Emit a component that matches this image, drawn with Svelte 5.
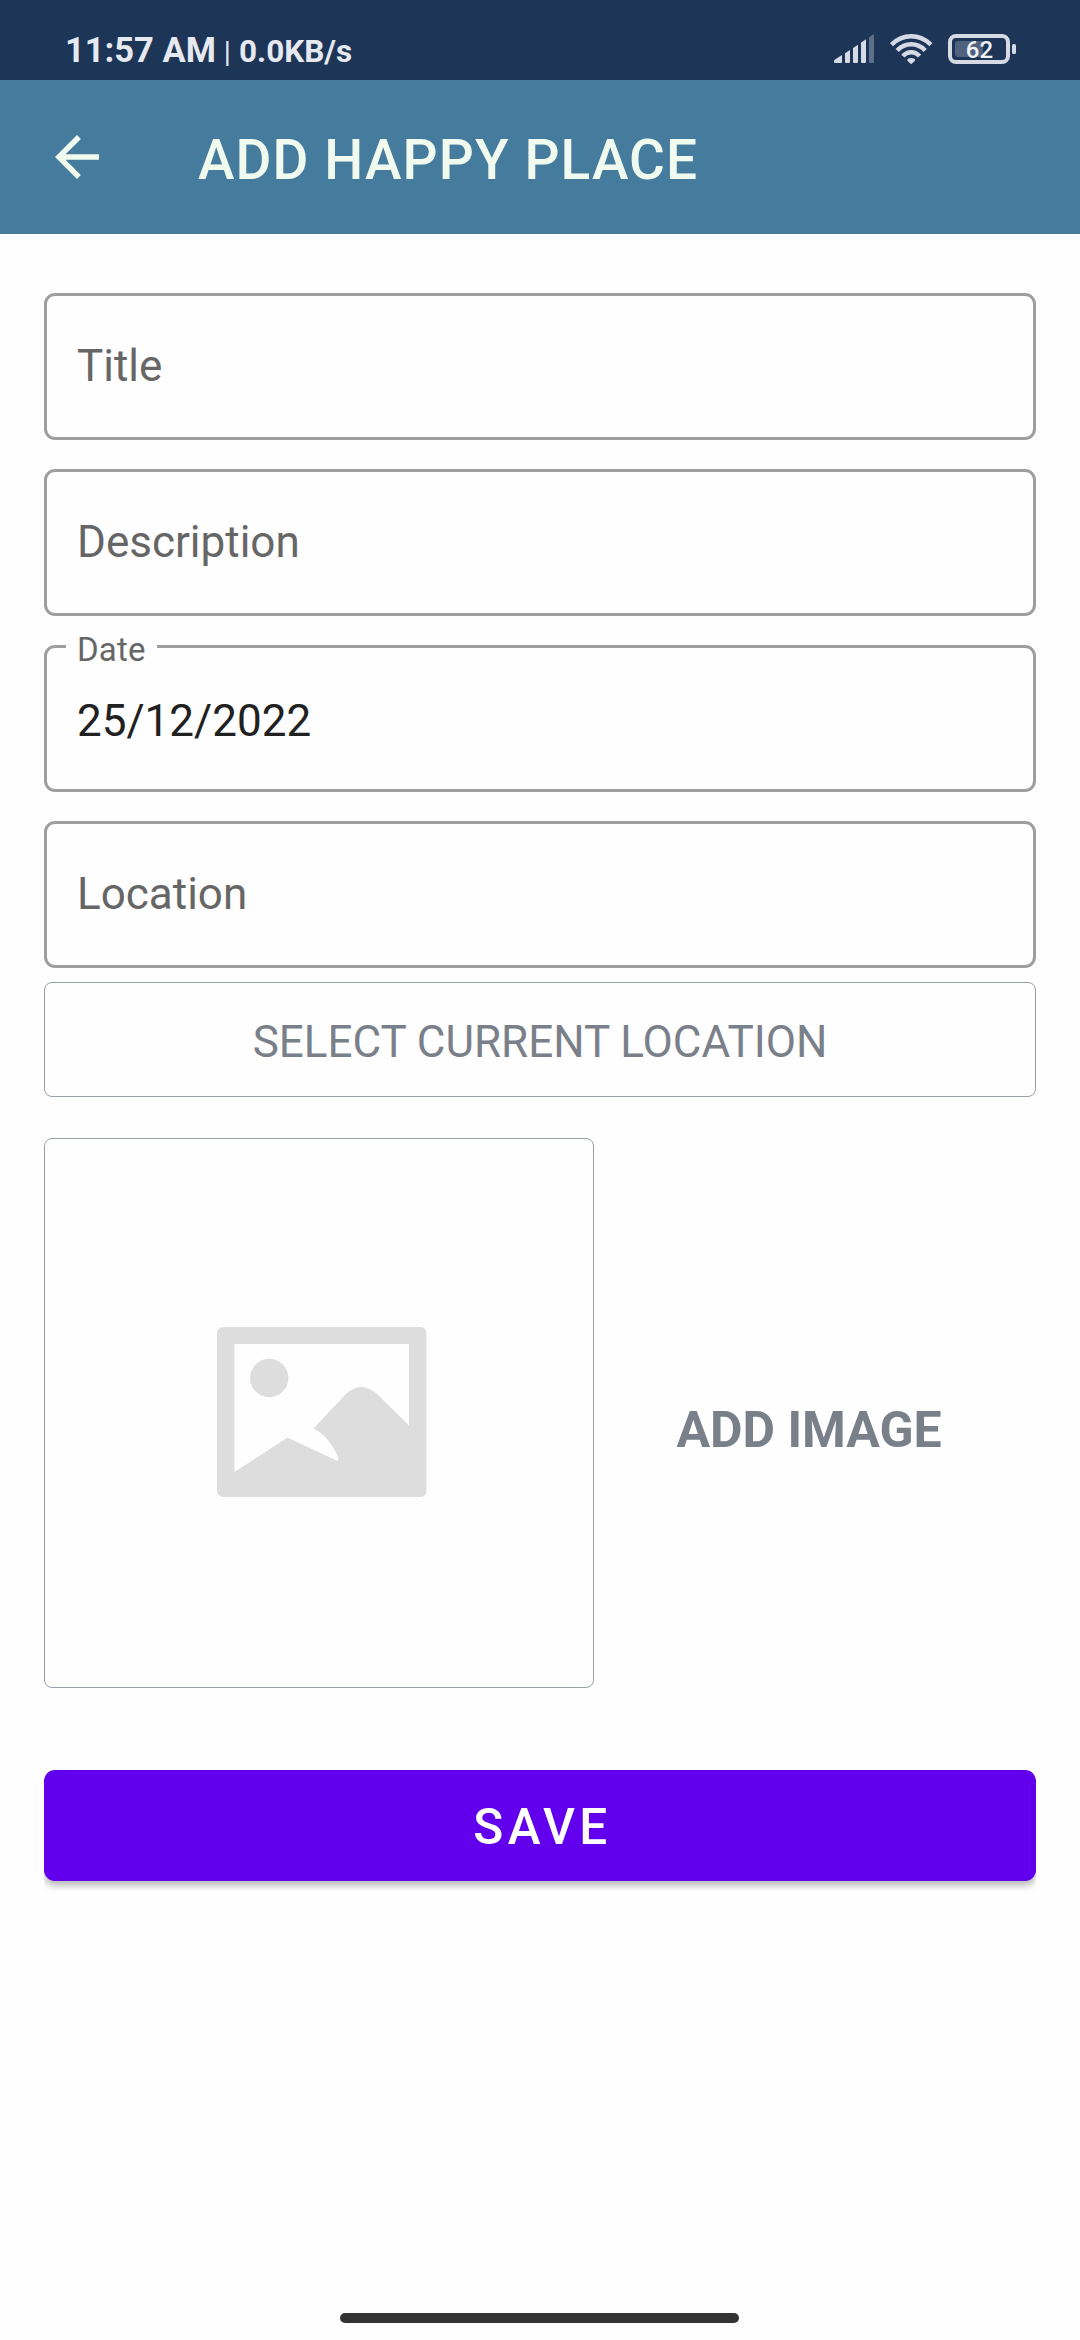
<script>
  const fields = [
    { label: 'Title', value: '' },
    { label: 'Description', value: '' },
    { label: 'Date', value: '25/12/2022' },
    { label: 'Location', value: '' }
  ];
</script>

<div class="screen">
  <header>
    <div class="status">
      <div class="clock"><span class="time">11:57 AM</span><span class="sep">|</span><span class="rate">0.0KB/s</span></div>
      <svg class="indicators" width="186" height="34" viewBox="0 0 186 34">
        <g fill="#d5dae4">
          <path d="M0 27.2 Q0 26.3 1 25.6 L8 21 V28 Q8 29 7 29 H1 Q0 29 0 28 Z" />
          <path d="M11 19.2 L16 16 V28 Q16 29 15 29 H12 Q11 29 11 28 Z" />
          <path d="M19 14 L24 10.8 V28 Q24 29 23 29 H20 Q19 29 19 28 Z" />
          <path d="M27 8.5 L32 5.2 V28 Q32 29 31 29 H28 Q27 29 27 28 Z" />
          <path d="M35 3.2 L40 0 V29 H36 Q35 29 35 28 Z" opacity=".35" />
          <path d="M77.2 30.2 L73.6 27 Q72.6 25.6 74.4 24.6 Q77.2 23.2 80 24.6 Q81.8 25.6 80.8 27 Z" />
        </g>
        <g fill="none" stroke="#d5dae4" stroke-width="4.4">
          <path d="M57.5 10.6 Q66 2.2 77.2 2.2 T96.9 10.6" />
          <path d="M63.2 16.4 Q69 10.2 77.2 10.2 T91.2 16.4" />
          <path d="M68.9 22.2 Q72.2 18.2 77.2 18.2 T85.5 22.2" />
        </g>
        <rect x="116" y="2" width="58" height="26" rx="6" fill="none" stroke="#d5dae4" stroke-width="4" />
        <path d="M124 7 H149 V23 H124 Q121 23 121 20 V10 Q121 7 124 7 Z" fill="#d5dae4" opacity=".27" />
        <rect x="178" y="10" width="4" height="10" rx="1.5" fill="#d5dae4" />
        <text x="145.5" y="24" text-anchor="middle" class="level">62</text>
      </svg>
    </div>
    <div class="toolbar">
      <svg class="back" width="44" height="44" viewBox="0 0 16 16" fill="#f1faee">
        <path d="M16 7H3.830l5.590-5.590L8 0 0 8l8 8 1.410-1.410L3.830 9H16V7z" />
      </svg>
      <h1>ADD HAPPY PLACE</h1>
    </div>
  </header>

  <main>
    <div class="fields">
      {#each fields as f}
        <div class="field">
          {#if f.value}
            <span class="float">{f.label}</span>
            <span class="value">{f.value}</span>
          {:else}
            <span class="hint">{f.label}</span>
          {/if}
        </div>
      {/each}
    </div>
    <button class="locate">SELECT CURRENT LOCATION</button>
    <div class="picture">
      <div class="preview">
        <svg width="210" height="170" viewBox="0 0 210 170">
          <path fill="#ddd" fill-rule="evenodd" d="M7 0H203Q209.5 0 209.5 7V163Q209.5 170 203 170H7Q0 170 0 163V7Q0 0 7 0Z M17.5 17V145L70.5 110.5L120.5 134Q122 133 121 130Q112 109 96.5 101.5L128 68Q144 52 161 68L192 98.5V17Z" />
          <circle cx="52.2" cy="51" r="19.2" fill="#ddd" />
        </svg>
      </div>
      <div class="add"><span>ADD IMAGE</span></div>
    </div>
    <div class="save-clip"><button class="save">SAVE</button></div>
  </main>
  <div class="home"></div>
</div>

<style>
  :global(body) { margin: 0; background: #fefefe; }
  .screen {
    width: 1080px;
    height: 2340px;
    display: flex;
    flex-direction: column;
    background: #fefefe;
    font-family: Roboto, sans-serif;
    overflow: hidden;
  }
  .status {
    height: 80px;
    box-sizing: border-box;
    padding: 34px 60px 0 65px;
    background: #1d3557;
    display: flex;
    justify-content: space-between;
    align-items: flex-start;
  }
  .clock {
    display: flex;
    align-items: baseline;
    color: #e6e9f0;
    font-weight: 700;
    line-height: 34px;
    margin-top: -1px;
    white-space: pre;
  }
  .time { font-size: 34.5px; }
  .sep { font-size: 29px; font-weight: 400; margin: 0 8px; }
  .rate { font-size: 31.5px; }
  .level { font: 500 24px Roboto, sans-serif; fill: #f0f2f6; }
  .toolbar {
    height: 154px;
    background: #457b9d;
    display: flex;
    align-items: center;
    padding-left: 55px;
  }
  .back { margin-right: 99px; }
  h1 {
    margin: 6px 0 0;
    font-size: 55px;
    font-weight: 500;
    letter-spacing: 1.1px;
    color: #f1faee;
  }
  main { flex: 1; padding: 59px 44px 0; }
  .fields { display: flex; flex-direction: column; gap: 29px; }
  .field {
    position: relative;
    height: 147px;
    box-sizing: border-box;
    border: 3px solid #9e9e9e;
    border-radius: 11px;
    padding-left: 30px;
    display: flex;
    align-items: center;
    font-size: 44px;
    color: #666;
  }
  .hint { padding-bottom: 2px; }
  .value { color: #212121; padding-top: 4px; }
  .float {
    position: absolute;
    left: 19px;
    top: -18px;
    padding: 0 11px 0 11px;
    background: #fefefe;
    font-size: 33px;
    line-height: 40px;
    letter-spacing: .2px;
  }
  button { display: block; width: 100%; padding: 0; font-family: inherit; }
  .locate {
    height: 115px;
    margin-top: 14px;
    padding-top: 4px;
    border: 1px solid #9aa0a8;
    border-radius: 8px;
    background: none;
    font-size: 44px;
    color: #7a808a;
  }
  .picture { display: flex; margin-top: 41px; }
  .preview {
    width: 550px;
    height: 550px;
    box-sizing: border-box;
    border: 1px solid #9aa0a8;
    border-radius: 8px;
    display: flex;
    align-items: center;
    justify-content: center;
  }
  .preview svg { margin: 0 0 2px 5px; }
  .add {
    flex: 1;
    display: flex;
    align-items: center;
    justify-content: center;
    padding: 33px 12px 0 0;
    font-size: 50px;
    font-weight: 700;
    color: #7a808a;
  }
  .save-clip { margin-top: 82px; padding-bottom: 16px; overflow: hidden; }
  .save {
    height: 111px;
    padding: 3px 0 0 5px;
    border: 0;
    border-radius: 11px;
    background: #6200ee;
    box-shadow: 0 5px 6px rgba(0, 0, 0, .25);
    color: #fff;
    font-size: 49.5px;
    font-weight: 500;
    letter-spacing: 4.4px;
  }
  .home {
    width: 399px;
    height: 10px;
    margin: 0 auto 17px 340px;
    border-radius: 5px;
    background: #333;
  }
</style>
